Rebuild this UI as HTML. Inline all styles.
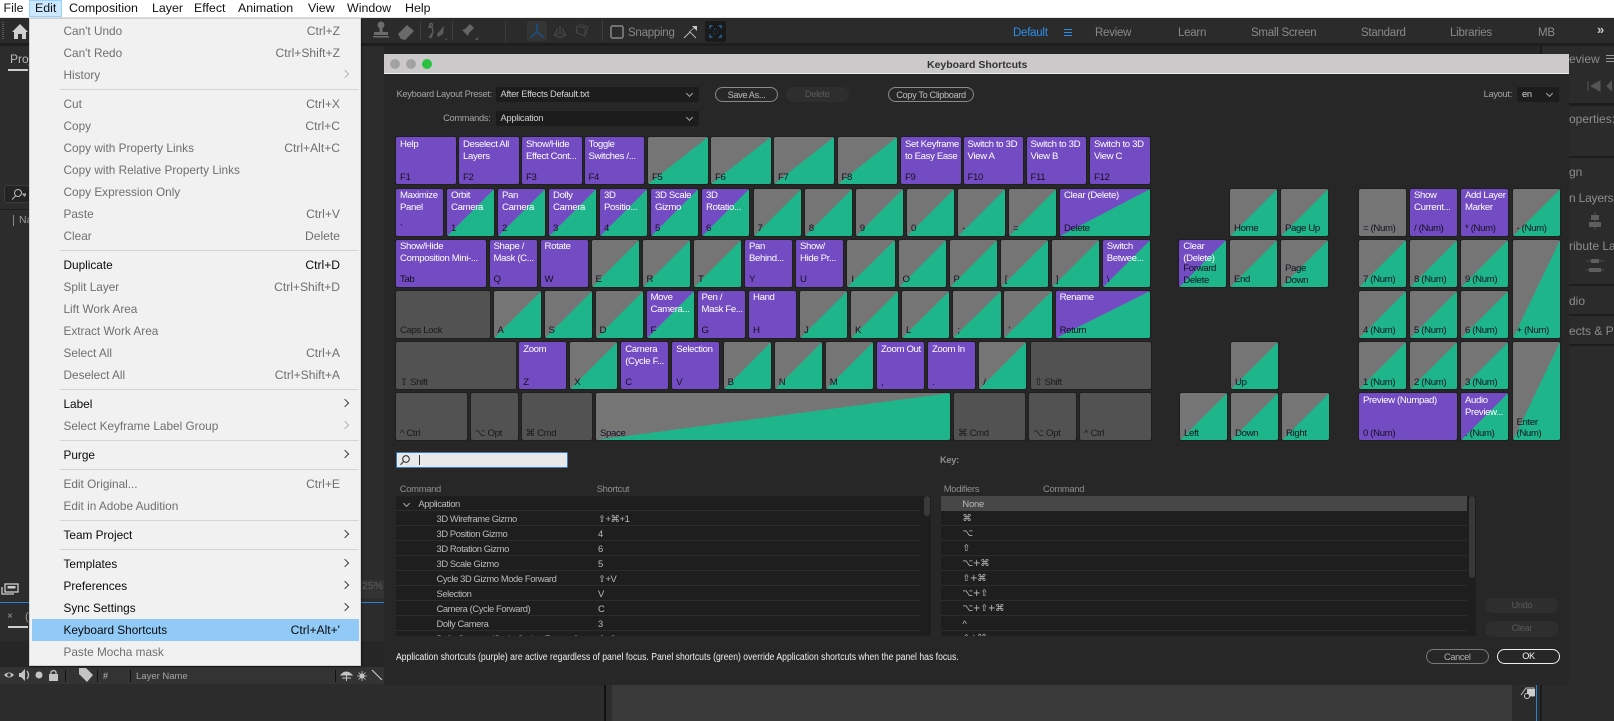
<!DOCTYPE html>
<html lang="en"><head><meta charset="utf-8"><title>Keyboard Shortcuts</title>
<style>
html,body{margin:0;padding:0;width:1614px;height:721px;overflow:hidden;background:#2c2c2c;font-family:"Liberation Sans",Arial,sans-serif}
#a{position:relative;width:1614px;height:721px;overflow:hidden}
.a,.t,.k,.s{position:absolute}
.t{white-space:nowrap;line-height:14px}
/* menu bar */
#mb{left:0;top:0;width:1614px;height:18px;background:#fff;border-bottom:1px solid #e4e4e4;box-sizing:border-box}
.m{position:absolute;top:1px;font-size:12.4px;line-height:15px;color:#111;white-space:nowrap}
/* menu */
#menu{left:28.5px;top:18px;width:332.5px;height:648px;background:#f1f1f1;border:1px solid #d0d0d0;box-sizing:border-box;box-shadow:1px 1px 2px rgba(0,0,0,.35)}
.it{position:absolute;left:34px;font-size:11.8px;line-height:14px;color:#6f6f6f;white-space:nowrap;margin-top:-1px}
.it.e{color:#0a0a0a}
.sc{position:absolute;right:20px;font-size:12.1px;line-height:14px;color:#6f6f6f;white-space:nowrap;margin-top:-1px}
.sc.e{color:#0a0a0a}
.sp{position:absolute;left:30px;width:299px;height:1px;background:#d4d4d4}
.ar{position:absolute;left:312.5px;width:5px;height:5px;border-top:1px solid #b4b4b4;border-right:1px solid #b4b4b4;transform:rotate(45deg);margin-top:-1px}
.ar.e{border-color:#444}
/* toolbar text */
.w{font-size:11.5px;color:#8a8a8a;top:26px;letter-spacing:-.25px}
.g{color:#8d8d8d;font-size:12px}
/* dialog */
#dlg{left:384px;top:54px;width:1184.5px;height:631px;background:#272727;overflow:hidden;border-radius:0 0 3px 3px}
#tb{left:384px;top:54px;width:1184.5px;height:20px;background:#cbc9ca;border-bottom:1px solid #eee;box-sizing:border-box}
.dot{position:absolute;width:10px;height:10px;border-radius:50%;top:59px}
.l{font-size:9.3px;color:#a4a4a4;line-height:12px;text-align:right;letter-spacing:-.3px}
.sel{position:absolute;background:#1c1c1c;border-radius:2px;height:15px;font-size:9.3px;color:#d2d2d2;line-height:15px;box-sizing:border-box;padding-left:5px;letter-spacing:-.25px}
.chev{position:absolute;right:7px;top:4px;width:4px;height:4px;border-right:1px solid #aaa;border-bottom:1px solid #aaa;transform:rotate(45deg)}
.btn{position:absolute;border:1px solid #8a8a8a;border-radius:8px;height:15.5px;line-height:14px;box-sizing:border-box;font-size:9.2px;color:#bdbdbd;text-align:center;letter-spacing:-.35px}
.dis{position:absolute;background:#2e2e2e;border-radius:8px;height:15.5px;line-height:15px;font-size:9.2px;color:#5a5a5a;text-align:center;letter-spacing:-.3px}
/* keys */
.k{width:47.2px;height:47px;box-sizing:border-box;border-radius:1.5px;font-size:9.6px;line-height:12px;color:#fff;overflow:hidden;outline:1px solid #1f1f1f;letter-spacing:-.35px}
.k u{position:absolute;left:4px;top:1.5px;text-decoration:none;white-space:nowrap;font-weight:normal}
.k i{position:absolute;left:4px;bottom:.5px;font-style:normal;color:#14101e;white-space:nowrap}
.k i.two{line-height:11.5px;bottom:.5px}
.p{background:#734cc3}
.gg{background:linear-gradient(to bottom right,#757575 50%,#1eb58b 50.2%)}
.pg{background:linear-gradient(to bottom right,#734cc3 50%,#1eb58b 50.2%)}
.gy{background:#757575}
.d{background:#525252}
.d i{color:#1a1a1a}
.r1{top:137.4px}.r2{top:188.7px}.r3{top:239.8px}.r4{top:290.9px}.r5{top:342px}.r6{top:393.2px}
/* table */
.tbl{position:absolute;background:#1e1e1e;top:495.7px;height:140.6px;overflow:hidden}
.ln{position:absolute;left:0;right:0;height:1px;background:#2c2c2c}
.c{position:absolute;font-size:9.4px;line-height:12px;color:#bcbcbc;white-space:nowrap;letter-spacing:-.4px;margin-top:.5px}
.h{position:absolute;font-size:9.4px;line-height:12px;color:#8f8f8f;white-space:nowrap;top:483px;letter-spacing:-.3px}
</style></head><body><div id="a">

<!-- app background -->
<div class="a" style="left:0;top:18px;width:1614px;height:25px;background:#2b2b2b"></div>
<div class="a" style="left:0;top:43px;width:1614px;height:3px;background:#1e1e1e"></div>
<div class="a" style="left:0;top:46px;width:384px;height:556px;background:#2c2c2c"></div>
<div class="a" style="left:384px;top:46px;width:1156px;height:8px;background:#262626"></div>
<div class="a" style="left:1541px;top:46px;width:73px;height:675px;background:#2b2b2b"></div>
<div class="a" style="left:1540px;top:46px;width:1.5px;height:675px;background:#1c1c1c"></div>
<div class="a" style="left:1568px;top:103px;width:46px;height:3px;background:#1d1d1d"></div>
<div class="a" style="left:1568px;top:156px;width:46px;height:2px;background:#1d1d1d"></div>
<div class="a" style="left:1568px;top:284px;width:46px;height:2px;background:#1d1d1d"></div>
<div class="a" style="left:1568px;top:314px;width:46px;height:2px;background:#1d1d1d"></div>
<div class="a" style="left:1568px;top:344px;width:46px;height:2px;background:#1d1d1d"></div>

<!-- bottom of app -->
<div class="a" style="left:0;top:602px;width:384px;height:1px;background:#2a7fd0"></div>
<div class="a" style="left:0;top:603px;width:384px;height:64px;background:#2c2c2c"></div>
<div class="a" style="left:0;top:641px;width:384px;height:26px;background:#262626"></div>
<div class="a" style="left:0;top:667px;width:384px;height:17px;background:#333"></div>
<div class="a" style="left:0;top:684px;width:604px;height:37px;background:#2c2c2c"></div>
<div class="a" style="left:604px;top:685px;width:2px;height:36px;background:#111"></div>
<div class="a" style="left:612px;top:685px;width:900px;height:36px;background:#3a3a3a"></div>
<div class="a" style="left:1512px;top:685px;width:28px;height:36px;background:#2b2b2b"></div>
<div class="a" style="left:1536px;top:685px;width:1px;height:36px;background:#2a7fd0"></div>
<svg class="a" style="left:1520px;top:686px" width="16" height="14" viewBox="0 0 16 14"><path d="M1 9 6 2h8v8H9" fill="none" stroke="#bbb"/><rect x="7" y="3" width="8" height="7" fill="#ccc"/><circle cx="7" cy="10" r="2.5" fill="#222" stroke="#ccc"/></svg>

<!-- left panel bits -->
<div class="t" style="left:10px;top:52px;font-size:12px;color:#b9b9b9">Proj</div>
<div class="a" style="left:8px;top:69px;width:20px;height:2px;background:#ccc"></div>
<div class="a" style="left:4px;top:185px;width:26px;height:18px;border:1px solid #3c3c3c;border-radius:3px;background:#232323;box-sizing:border-box"></div>
<svg class="a" style="left:10px;top:188px" width="16" height="12" viewBox="0 0 16 12"><circle cx="8" cy="5" r="3.5" fill="none" stroke="#bbb"/><path d="M5.5 8 2 11.5M13 6h3l-1.500 2z" stroke="#bbb" fill="none"/></svg>
<div class="a" style="left:13px;top:215px;width:1px;height:11px;background:#888"></div>
<div class="t" style="left:19px;top:213px;font-size:10.5px;color:#9a9a9a">Na</div>
<div class="a" style="left:0;top:209px;width:29px;height:1px;background:#1c1c1c"></div>
<svg class="a" style="left:1px;top:583px" width="18" height="12" viewBox="0 0 18 12"><rect x="4" y="1" width="13" height="8" fill="none" stroke="#ccc" stroke-width="1.300"/><rect x="6.500" y="3" width="8" height="2.500" fill="#ccc"/><path d="M1 4v7h12" fill="none" stroke="#ccc" stroke-width="1.300"/></svg>
<div class="a" style="left:361px;top:580px;width:23px;height:18px;background:#333"></div>
<div class="t" style="left:362px;top:579px;font-size:10.5px;color:#5e5e5e">25%</div>
<div class="t" style="left:7px;top:610px;font-size:10px;color:#9a9a9a">×</div>
<div class="t" style="left:25px;top:610px;font-size:11px;color:#9a9a9a">(</div>
<div class="a" style="left:8px;top:626px;width:20px;height:2px;background:#ccc"></div>

<!-- layer header -->
<svg class="a" style="left:3px;top:667px" width="58" height="16" viewBox="0 0 58 16"><path d="M1 8q5-5 10 0-5 5-10 0z" fill="#c4c4c4"/><circle cx="6" cy="8" r="1.800" fill="#333"/><path d="M16 6h2l4-4v12l-4-4h-2z" fill="#c4c4c4"/><path d="M24 4q3 4 0 8" fill="none" stroke="#c4c4c4" stroke-width="1.300"/><circle cx="36" cy="8" r="3.500" fill="#c4c4c4"/><rect x="46" y="7" width="9" height="7" fill="#c4c4c4"/><path d="M48 7V5q2.500-3 5 0v2" fill="none" stroke="#c4c4c4" stroke-width="1.300"/></svg>
<div class="a" style="left:65px;top:670px;width:1px;height:12px;background:#111"></div>
<svg class="a" style="left:78px;top:667px" width="16" height="16" viewBox="0 0 16 16"><path d="M1 1h7l7 7-6 7-8-8z" fill="#c4c4c4"/></svg>
<div class="a" style="left:97px;top:670px;width:1px;height:12px;background:#111"></div>
<div class="t" style="left:103px;top:669px;font-size:9px;color:#bbb">#</div>
<div class="a" style="left:130px;top:670px;width:1px;height:12px;background:#111"></div>
<div class="t" style="left:136px;top:670px;font-size:9.5px;color:#a4a4a4">Layer Name</div>
<div class="a" style="left:335px;top:670px;width:1px;height:12px;background:#111"></div>
<svg class="a" style="left:340px;top:668px" width="44" height="15" viewBox="0 0 44 15"><path d="M1 7q5-6 11 0zM6.500 7v6M2 10h9" fill="#c4c4c4" stroke="#c4c4c4"/><circle cx="22" cy="8" r="2.500" fill="#c4c4c4"/><path d="M22 3v10M17 8h10M18.500 4.500l7 7M25.500 4.500l-7 7" stroke="#c4c4c4" stroke-width=".8"/><path d="M32 2l2 2 6 6 2 2" stroke="#c4c4c4" stroke-width="1.200"/></svg>

<!-- toolbar -->
<svg class="a" style="left:0;top:18px" width="40" height="25" viewBox="0 0 40 25"><path d="M3 4v18" stroke="#555" stroke-width="2" stroke-dasharray="1 1"/><path d="M12 14l8-8 8 8h-2v7h-4v-5h-4v5h-4v-7z" fill="#d0d0d0"/></svg>
<svg class="a" style="left:372px;top:20px" width="18" height="20" viewBox="0 0 18 20"><circle cx="9" cy="5" r="3.500" fill="#6c6c6c"/><rect x="7.500" y="7" width="3" height="6" fill="#6c6c6c"/><rect x="2" y="12" width="14" height="3" fill="#6c6c6c"/><rect x="1" y="16" width="16" height="1.500" fill="#6c6c6c"/></svg>
<svg class="a" style="left:390px;top:18px" width="240" height="25" viewBox="0 0 240 25">
<path d="M8 16 17 7l7 6-9 9-4-1z" fill="#6a6a6a"/>
<rect x="30" y="3" width="1" height="19" fill="#3e3e3e"/>
<path d="M38 9h4l1 5-2 6M43 14l-4 6M41 5.500a1.500 1.500 0 1 0 .1 0z" stroke="#5c5c5c" fill="none" stroke-width="1.400"/><path d="M47 16l7-8-1 8-5 3z" fill="#5c5c5c"/><path d="M55 22h2v-2z" fill="#5c5c5c"/>
<rect x="62" y="3" width="1" height="19" fill="#3e3e3e"/>
<path d="M70 21l5-6-3-3 3-1 5-5 4 4-5 5-1 3-3-3z" fill="#666"/><path d="M85 22h3v-3z" fill="#5c5c5c"/>
<rect x="115" y="3" width="1" height="22" fill="#3a3a3a"/>
<rect x="137" y="3" width="20" height="20" rx="2" fill="#343434"/>
<path d="M147 8v6m0 0-6 4.500m6-4.500 6 4.500" stroke="#1a4f80" stroke-width="1.500" fill="none"/><path d="M147 5l-2 3h4zM140 20l3-.5-1.500-2.500zM154 20l-3-.5 1.500-2.500z" fill="#1a4f80"/>
<path d="M170 8v6m0 0-5 4m5-4 5 4M166 19h8M168 10l-4 8M172 10l4 8" stroke="#4c4c4c" fill="none"/>
<path d="M187 8l8 2v8l-8-3zM187 8l-1 7M187 15l8 3M189 6l9 3-3 9" stroke="#464646" fill="none"/>
<rect x="212" y="2" width="1" height="21" fill="#3e3e3e"/>
<rect x="221" y="8" width="12" height="12" rx="1.500" fill="none" stroke="#7c7c7c" stroke-width="1.700"/>
</svg>
<div class="t g" style="left:628px;top:26px;font-size:11.500px;letter-spacing:-.25px;color:#888">Snapping</div>
<svg class="a" style="left:682px;top:24px" width="18" height="16" viewBox="0 0 18 16"><path d="M2 14l6-6 6 6" stroke="#b5b5b5" fill="none" stroke-width="1"/><path d="M7 8 12 4" stroke="#b5b5b5" stroke-width=".8"/><path d="M10 2h5v5z" fill="#c8c8c8"/></svg>
<div class="a" style="left:705px;top:21px;width:21px;height:21px;background:#1a1a1a;border-radius:2px"></div>
<svg class="a" style="left:709px;top:25px" width="13" height="13" viewBox="0 0 15 15"><path d="M1 4V1h3M11 1h3v3M14 11v3h-3M4 14H1v-3" stroke="#2a82d3" fill="none" stroke-width="1.100"/><path d="M6 5h1M9 5h-.5M5 8h.8M9.500 8h.8M6 10.500h1" stroke="#2a82d3"/></svg>

<!-- workspace tabs -->
<div class="t w" style="left:1013px;color:#2d8fe8">Default</div>
<div class="a" style="left:1064px;top:29px;width:8px;height:1px;background:#2d8fe8;box-shadow:0 3px 0 #2d8fe8,0 6px 0 #2d8fe8"></div>
<div class="t w" style="left:1095px">Review</div>
<div class="t w" style="left:1178px">Learn</div>
<div class="t w" style="left:1251px">Small Screen</div>
<div class="t w" style="left:1361px">Standard</div>
<div class="t w" style="left:1450px">Libraries</div>
<div class="t w" style="left:1538px">MB</div>
<div class="t" style="left:1597px;top:23px;font-size:13px;color:#c8c8c8;font-weight:bold">»</div>

<!-- right panels -->
<div class="t g" style="left:1569px;top:52px">eview</div>
<div class="a" style="left:1606px;top:55px;width:8px;height:1px;background:#9a9a9a;box-shadow:0 3px 0 #9a9a9a,0 6px 0 #9a9a9a"></div>
<svg class="a" style="left:1587px;top:80px" width="27" height="12" viewBox="0 0 27 12"><path d="M1 1v10M13 1v10L4 6zM25 1l-5 5 5 5" fill="#555" stroke="#555"/></svg>
<div class="t g" style="left:1569px;top:112px">operties: N</div>
<div class="t g" style="left:1569px;top:165px">gn</div>
<div class="t g" style="left:1569px;top:191px;letter-spacing:-.2px">n Layers t</div>
<svg class="a" style="left:1587px;top:212px" width="16" height="18" viewBox="0 0 16 18"><path d="M8 0v18" stroke="#4d4d4d"/><rect x="4" y="3" width="8" height="5" fill="#5e5e5e"/><rect x="2" y="10" width="12" height="5" fill="#5e5e5e"/></svg>
<div class="t g" style="left:1569px;top:239px">ribute Lay</div>
<svg class="a" style="left:1586px;top:256px" width="18" height="18" viewBox="0 0 18 18"><path d="M0 5h18M0 14h18" stroke="#4d4d4d"/><rect x="5" y="3" width="8" height="4" fill="#5e5e5e"/><rect x="3" y="12" width="12" height="4" fill="#5e5e5e"/></svg>
<div class="t g" style="left:1569px;top:294px">dio</div>
<div class="t g" style="left:1569px;top:324px">ects &amp; Pre</div>

<!-- menu bar -->
<div class="a" id="mb"></div>
<div class="a" style="left:28.500px;top:0;width:33.500px;height:17px;background:#cce8ff;border:1px solid #99d1ff;box-sizing:border-box"></div>
<span class="m" style="left:3.500px">File</span>
<span class="m" style="left:35px">Edit</span>
<span class="m" style="left:69px">Composition</span>
<span class="m" style="left:152px">Layer</span>
<span class="m" style="left:194px">Effect</span>
<span class="m" style="left:238px">Animation</span>
<span class="m" style="left:308px">View</span>
<span class="m" style="left:347px">Window</span>
<span class="m" style="left:405px">Help</span>

<!-- dialog -->
<div class="a" id="dlg"></div>
<div class="a" id="tb"></div>
<div class="dot" style="left:390px;background:#a2a2a2"></div>
<div class="dot" style="left:406px;background:#a2a2a2"></div>
<div class="dot" style="left:421.500px;background:#29c13f"></div>
<div class="t" style="left:927px;top:57.500px;font-size:10.500px;font-weight:bold;color:#333">Keyboard Shortcuts</div>

<div class="t l" style="left:396.500px;top:88px;width:94px">Keyboard Layout Preset:</div>
<div class="sel" style="left:495.500px;top:86.700px;width:203px">After Effects Default.txt<span class="chev"></span></div>
<div class="t l" style="left:396.500px;top:112px;width:94px">Commands:</div>
<div class="sel" style="left:495.500px;top:110.700px;width:203px">Application<span class="chev"></span></div>
<div class="btn" style="left:715px;top:86.500px;width:63px">Save As...</div>
<div class="dis" style="left:785.500px;top:86.500px;width:63.500px">Delete</div>
<div class="btn" style="left:888px;top:86.500px;width:86px">Copy To Clipboard</div>
<div class="t l" style="left:1470px;top:88px;width:42px">Layout:</div>
<div class="sel" style="left:1517px;top:86.700px;width:42px">en<span class="chev"></span></div>

<!-- row 1 -->
<div class="k p r1" style="left:396px;width:59.500px"><u>Help</u><i>F1</i></div>
<div class="k p r1" style="left:459px;width:59.500px"><u>Deselect All<br>Layers</u><i>F2</i></div>
<div class="k p r1" style="left:522px;width:59.500px"><u>Show/Hide<br>Effect Cont...</u><i>F3</i></div>
<div class="k p r1" style="left:584.500px;width:59.500px"><u>Toggle<br>Switches /...</u><i>F4</i></div>
<div class="k gg r1" style="left:648px;width:59.500px"><i>F5</i></div>
<div class="k gg r1" style="left:711px;width:59.500px"><i>F6</i></div>
<div class="k gg r1" style="left:774px;width:59.500px"><i>F7</i></div>
<div class="k gg r1" style="left:837.500px;width:59.500px"><i>F8</i></div>
<div class="k p r1" style="left:901px;width:59.500px"><u>Set Keyframe<br>to Easy Ease</u><i>F9</i></div>
<div class="k p r1" style="left:963.500px;width:59.500px"><u>Switch to 3D<br>View A</u><i>F10</i></div>
<div class="k p r1" style="left:1026.500px;width:59.500px"><u>Switch to 3D<br>View B</u><i>F11</i></div>
<div class="k p r1" style="left:1090px;width:60px"><u>Switch to 3D<br>View C</u><i>F12</i></div>

<!-- row 2 -->
<div class="k p r2" style="left:396px"><u>Maximize<br>Panel</u><i>`</i></div>
<div class="k pg r2" style="left:447px"><u>Orbit<br>Camera</u><i>1</i></div>
<div class="k pg r2" style="left:498px"><u>Pan<br>Camera</u><i>2</i></div>
<div class="k pg r2" style="left:549px"><u>Dolly<br>Camera</u><i>3</i></div>
<div class="k pg r2" style="left:600px"><u>3D<br>Positio...</u><i>4</i></div>
<div class="k pg r2" style="left:651px"><u>3D Scale<br>Gizmo</u><i>5</i></div>
<div class="k pg r2" style="left:702px"><u>3D<br>Rotatio...</u><i>6</i></div>
<div class="k gg r2" style="left:753.500px"><i>7</i></div>
<div class="k gg r2" style="left:804.700px"><i>8</i></div>
<div class="k gg r2" style="left:855.800px"><i>9</i></div>
<div class="k gg r2" style="left:907px"><i>0</i></div>
<div class="k gg r2" style="left:958px"><i>-</i></div>
<div class="k gg r2" style="left:1009px"><i>=</i></div>
<div class="k pg r2" style="left:1060px;width:90px"><u>Clear (Delete)</u><i>Delete</i></div>
<div class="k gg r2" style="left:1230px"><i>Home</i></div>
<div class="k gg r2" style="left:1281px"><i>Page Up</i></div>
<div class="k gy r2" style="left:1359px"><i>= (Num)</i></div>
<div class="k p r2" style="left:1410px"><u>Show<br>Current...</u><i>/ (Num)</i></div>
<div class="k p r2" style="left:1461px"><u>Add Layer<br>Marker</u><i>* (Num)</i></div>
<div class="k gg r2" style="left:1512.500px"><i>- (Num)</i></div>

<!-- row 3 -->
<div class="k p r3" style="left:396px;width:90px"><u>Show/Hide<br>Composition Mini-...</u><i>Tab</i></div>
<div class="k p r3" style="left:489.500px"><u>Shape /<br>Mask (C...</u><i>Q</i></div>
<div class="k p r3" style="left:540.500px"><u>Rotate</u><i>W</i></div>
<div class="k gg r3" style="left:591.500px"><i>E</i></div>
<div class="k gg r3" style="left:642.500px"><i>R</i></div>
<div class="k gg r3" style="left:694px"><i>T</i></div>
<div class="k p r3" style="left:745px"><u>Pan<br>Behind...</u><i>Y</i></div>
<div class="k p r3" style="left:796px"><u>Show/<br>Hide Pr...</u><i>U</i></div>
<div class="k gg r3" style="left:847.400px"><i>I</i></div>
<div class="k gg r3" style="left:898.500px"><i>O</i></div>
<div class="k gg r3" style="left:949.500px"><i>P</i></div>
<div class="k gg r3" style="left:1000.800px"><i>[</i></div>
<div class="k gg r3" style="left:1051.700px"><i>]</i></div>
<div class="k pg r3" style="left:1102.700px"><u>Switch<br>Betwee...</u><i>\</i></div>
<div class="k pg r3" style="left:1179.300px"><u>Clear<br>(Delete)</u><i class="two">Forward<br>Delete</i></div>
<div class="k gg r3" style="left:1230px"><i>End</i></div>
<div class="k gg r3" style="left:1281px"><i class="two">Page<br>Down</i></div>
<div class="k gg r3" style="left:1359px"><i>7 (Num)</i></div>
<div class="k gg r3" style="left:1410px"><i>8 (Num)</i></div>
<div class="k gg r3" style="left:1461px"><i>9 (Num)</i></div>
<div class="k gg r3" style="left:1512.500px;height:98px"><i>+ (Num)</i></div>

<!-- row 4 -->
<div class="k d r4" style="left:396px;width:94px"><i>Caps Lock</i></div>
<div class="k gg r4" style="left:493.500px"><i>A</i></div>
<div class="k gg r4" style="left:544.500px"><i>S</i></div>
<div class="k gg r4" style="left:595.500px"><i>D</i></div>
<div class="k pg r4" style="left:646.500px"><u>Move<br>Camera...</u><i>F</i></div>
<div class="k p r4" style="left:697.500px"><u>Pen /<br>Mask Fe...</u><i>G</i></div>
<div class="k p r4" style="left:749px"><u>Hand</u><i>H</i></div>
<div class="k gg r4" style="left:800px"><i>J</i></div>
<div class="k gg r4" style="left:851px"><i>K</i></div>
<div class="k gg r4" style="left:902px"><i>L</i></div>
<div class="k gg r4" style="left:953.400px"><i>;</i></div>
<div class="k gg r4" style="left:1004.400px"><i>'</i></div>
<div class="k pg r4" style="left:1055.600px;width:94.400px"><u>Rename</u><i>Return</i></div>
<div class="k gg r4" style="left:1359px"><i>4 (Num)</i></div>
<div class="k gg r4" style="left:1410px"><i>5 (Num)</i></div>
<div class="k gg r4" style="left:1461px"><i>6 (Num)</i></div>

<!-- row 5 -->
<div class="k d r5" style="left:396px;width:120px"><i style="color:#1a1a1a"><span style="font-family:'DejaVu Sans',sans-serif">⇧</span> Shift</i></div>
<div class="k p r5" style="left:519.200px"><u>Zoom</u><i>Z</i></div>
<div class="k gg r5" style="left:570.200px"><i>X</i></div>
<div class="k p r5" style="left:621.200px"><u>Camera<br>(Cycle F...</u><i>C</i></div>
<div class="k p r5" style="left:672.300px"><u>Selection</u><i>V</i></div>
<div class="k gg r5" style="left:723.600px"><i>B</i></div>
<div class="k gg r5" style="left:774.700px"><i>N</i></div>
<div class="k gg r5" style="left:825.700px"><i>M</i></div>
<div class="k p r5" style="left:877px"><u>Zoom Out</u><i>,</i></div>
<div class="k p r5" style="left:928px"><u>Zoom In</u><i>.</i></div>
<div class="k gg r5" style="left:979.200px"><i>/</i></div>
<div class="k d r5" style="left:1030.500px;width:120px"><i><span style="font-family:'DejaVu Sans',sans-serif">⇧</span> Shift</i></div>
<div class="k gg r5" style="left:1231px"><i>Up</i></div>
<div class="k gg r5" style="left:1359px"><i>1 (Num)</i></div>
<div class="k gg r5" style="left:1410px"><i>2 (Num)</i></div>
<div class="k gg r5" style="left:1461px"><i>3 (Num)</i></div>
<div class="k gg r5" style="left:1512.500px;height:98px"><i class="two">Enter<br>(Num)</i></div>

<!-- row 6 -->
<div class="k d r6" style="left:396px;width:70.500px"><i>^ Ctrl</i></div>
<div class="k d r6" style="left:470.500px"><i><span style="font-family:'DejaVu Sans',sans-serif">⌥</span> Opt</i></div>
<div class="k d r6" style="left:521.500px;width:70.500px"><i><span style="font-family:'DejaVu Sans',sans-serif">⌘</span> Cmd</i></div>
<div class="k gg r6" style="left:596px;width:354px"><i>Space</i></div>
<div class="k d r6" style="left:954px;width:70.500px"><i><span style="font-family:'DejaVu Sans',sans-serif">⌘</span> Cmd</i></div>
<div class="k d r6" style="left:1029px"><i><span style="font-family:'DejaVu Sans',sans-serif">⌥</span> Opt</i></div>
<div class="k d r6" style="left:1080px;width:70.500px"><i>^ Ctrl</i></div>
<div class="k gg r6" style="left:1180px"><i>Left</i></div>
<div class="k gg r6" style="left:1231px"><i>Down</i></div>
<div class="k gg r6" style="left:1282px"><i>Right</i></div>
<div class="k p r6" style="left:1359px;width:98px"><u>Preview (Numpad)</u><i>0 (Num)</i></div>
<div class="k pg r6" style="left:1461px"><u>Audio<br>Preview...</u><i>. (Num)</i></div>

<!-- search -->
<div class="a" style="left:396px;top:452.300px;width:172px;height:15.500px;background:#e9e9e9;border:1px solid #3b7fc4;box-sizing:border-box;border-radius:1.500px"></div>
<svg class="a" style="left:399px;top:454px" width="12" height="12" viewBox="0 0 12 12"><circle cx="7" cy="5" r="3.300" fill="none" stroke="#333" stroke-width="1.100"/><path d="M4.500 7.500 1.500 10.800" stroke="#333" stroke-width="1.100"/></svg>
<div class="a" style="left:418.500px;top:455px;width:1px;height:10px;background:#333"></div>
<div class="t l" style="left:940px;top:454px;text-align:left;font-weight:bold;color:#8e8e8e">Key:</div>

<!-- headers -->
<div class="h" style="left:399.800px">Command</div>
<div class="h" style="left:596.700px">Shortcut</div>
<div class="h" style="left:943.800px">Modifiers</div>
<div class="h" style="left:1043px">Command</div>

<!-- table left -->
<div class="tbl" style="left:396px;width:535px">
<div class="ln" style="top:14.500px;right:11px"></div><div class="ln" style="top:29.500px;right:11px"></div><div class="ln" style="top:44.500px;right:11px"></div><div class="ln" style="top:59.500px;right:11px"></div><div class="ln" style="top:74.500px;right:11px"></div><div class="ln" style="top:89.500px;right:11px"></div><div class="ln" style="top:104.500px;right:11px"></div><div class="ln" style="top:119.500px;right:11px"></div><div class="ln" style="top:134.500px;right:11px"></div>
</div>
<div class="a" style="left:923.500px;top:496px;width:6.500px;height:20px;background:#3a3a3a;border-radius:3px"></div>
<div class="a" style="left:404px;top:501px;width:4px;height:4px;border-right:1px solid #aaa;border-bottom:1px solid #aaa;transform:rotate(45deg)"></div>
<div class="c" style="left:418.400px;top:497.500px">Application</div>
<div class="c" style="left:436.500px;top:512.500px">3D Wireframe Gizmo</div><div class="c" style="left:598px;top:512.500px;font-family:'Liberation Sans','DejaVu Sans',sans-serif">⇧+⌘+1</div>
<div class="c" style="left:436.500px;top:527.500px">3D Position Gizmo</div><div class="c" style="left:598px;top:527.500px">4</div>
<div class="c" style="left:436.500px;top:542.500px">3D Rotation Gizmo</div><div class="c" style="left:598px;top:542.500px">6</div>
<div class="c" style="left:436.500px;top:557.500px">3D Scale Gizmo</div><div class="c" style="left:598px;top:557.500px">5</div>
<div class="c" style="left:436.500px;top:572.500px">Cycle 3D Gizmo Mode Forward</div><div class="c" style="left:598px;top:572.500px;font-family:'Liberation Sans','DejaVu Sans',sans-serif">⇧+V</div>
<div class="c" style="left:436.500px;top:587.500px">Selection</div><div class="c" style="left:598px;top:587.500px">V</div>
<div class="c" style="left:436.500px;top:602.500px">Camera (Cycle Forward)</div><div class="c" style="left:598px;top:602.500px">C</div>
<div class="c" style="left:436.500px;top:617.500px">Dolly Camera</div><div class="c" style="left:598px;top:617.500px">3</div>
<div class="a" style="left:396px;top:631px;width:527px;height:5.300px;overflow:hidden"><div class="c" style="left:40.500px;top:1.500px">Dolly Camera (Cycle Option Forward)</div><div class="c" style="left:202px;top:1.500px;font-family:'Liberation Sans','DejaVu Sans',sans-serif">⇧+3</div></div>

<!-- table right -->
<div class="tbl" style="left:940.700px;width:535.300px">
<div class="a" style="left:0;top:0;width:526px;height:15px;background:#474747"></div>
<div class="ln" style="top:29.500px;right:9px"></div><div class="ln" style="top:44.500px;right:9px"></div><div class="ln" style="top:59.500px;right:9px"></div><div class="ln" style="top:74.500px;right:9px"></div><div class="ln" style="top:89.500px;right:9px"></div><div class="ln" style="top:104.500px;right:9px"></div><div class="ln" style="top:119.500px;right:9px"></div><div class="ln" style="top:134.500px;right:9px"></div>
</div>
<div class="a" style="left:1468.500px;top:496px;width:6.500px;height:82px;background:#383838;border-radius:3px"></div>
<div class="c" style="left:962.400px;top:497.500px;letter-spacing:-.2px">None</div>
<div class="c" style="left:962.400px;top:512.500px;font-family:'DejaVu Sans',sans-serif">⌘</div>
<div class="c" style="left:962.400px;top:527.500px;font-family:'DejaVu Sans',sans-serif">⌥</div>
<div class="c" style="left:962.400px;top:542.500px;font-family:'DejaVu Sans',sans-serif">⇧</div>
<div class="c" style="left:962.400px;top:557.500px;font-family:'DejaVu Sans',sans-serif">⌥+⌘</div>
<div class="c" style="left:962.400px;top:572.500px;font-family:'DejaVu Sans',sans-serif">⇧+⌘</div>
<div class="c" style="left:962.400px;top:587.500px;font-family:'DejaVu Sans',sans-serif">⌥+⇧</div>
<div class="c" style="left:962.400px;top:602.500px;font-family:'DejaVu Sans',sans-serif">⌥+⇧+⌘</div>
<div class="c" style="left:962.400px;top:617.500px">^</div>
<div class="a" style="left:940px;top:631px;width:80px;height:5.300px;overflow:hidden"><div class="c" style="left:22.400px;top:1.500px;font-family:'DejaVu Sans',sans-serif">⇧+⌘</div></div>

<!-- buttons -->
<div class="dis" style="left:1484.700px;top:597.700px;width:74.300px">Undo</div>
<div class="dis" style="left:1484.700px;top:621px;width:74.300px">Clear</div>
<div class="t" style="left:396px;top:651px;font-size:10px;color:#f0f0f0;transform:scaleX(.863);transform-origin:0 50%">Application shortcuts (purple) are active regardless of panel focus. Panel shortcuts (green) override Application shortcuts when the panel has focus.</div>
<div class="btn" style="left:1426px;top:648.900px;width:62.600px;color:#b0b0b0;border-color:#7a7a7a">Cancel</div>
<div class="btn" style="left:1497px;top:648.900px;width:63px;color:#f2f2f2;border-color:#f0f0f0;border-width:1.300px;line-height:13.500px">OK</div>

<!-- Edit menu -->
<div class="a" id="menu">
<div class="a" style="left:2px;top:600px;width:327px;height:22px;background:#91c9f7"></div>
<div class="it" style="top:5.700px">Can't Undo</div><div class="sc" style="top:5.700px">Ctrl+Z</div>
<div class="it" style="top:27.700px">Can't Redo</div><div class="sc" style="top:27.700px">Ctrl+Shift+Z</div>
<div class="it" style="top:49.700px">History</div><div class="ar" style="top:53px"></div>
<div class="sp" style="top:70px"></div>
<div class="it" style="top:78.700px">Cut</div><div class="sc" style="top:78.700px">Ctrl+X</div>
<div class="it" style="top:100.700px">Copy</div><div class="sc" style="top:100.700px">Ctrl+C</div>
<div class="it" style="top:122.700px">Copy with Property Links</div><div class="sc" style="top:122.700px">Ctrl+Alt+C</div>
<div class="it" style="top:144.700px">Copy with Relative Property Links</div>
<div class="it" style="top:166.700px">Copy Expression Only</div>
<div class="it" style="top:188.700px">Paste</div><div class="sc" style="top:188.700px">Ctrl+V</div>
<div class="it" style="top:210.700px">Clear</div><div class="sc" style="top:210.700px">Delete</div>
<div class="sp" style="top:231px"></div>
<div class="it e" style="top:240px">Duplicate</div><div class="sc e" style="top:240px">Ctrl+D</div>
<div class="it" style="top:262px">Split Layer</div><div class="sc" style="top:262px">Ctrl+Shift+D</div>
<div class="it" style="top:284px">Lift Work Area</div>
<div class="it" style="top:306px">Extract Work Area</div>
<div class="it" style="top:328px">Select All</div><div class="sc" style="top:328px">Ctrl+A</div>
<div class="it" style="top:350px">Deselect All</div><div class="sc" style="top:350px">Ctrl+Shift+A</div>
<div class="sp" style="top:370px"></div>
<div class="it e" style="top:378.700px">Label</div><div class="ar e" style="top:382px"></div>
<div class="it" style="top:400.700px">Select Keyframe Label Group</div><div class="ar" style="top:404px"></div>
<div class="sp" style="top:421px"></div>
<div class="it e" style="top:430px">Purge</div><div class="ar e" style="top:433px"></div>
<div class="sp" style="top:450px"></div>
<div class="it" style="top:459px">Edit Original...</div><div class="sc" style="top:459px">Ctrl+E</div>
<div class="it" style="top:480.700px">Edit in Adobe Audition</div>
<div class="sp" style="top:501px"></div>
<div class="it e" style="top:509.700px">Team Project</div><div class="ar e" style="top:513px"></div>
<div class="sp" style="top:530px"></div>
<div class="it e" style="top:538.700px">Templates</div><div class="ar e" style="top:542px"></div>
<div class="it e" style="top:560.700px">Preferences</div><div class="ar e" style="top:564px"></div>
<div class="it e" style="top:582.700px">Sync Settings</div><div class="ar e" style="top:586px"></div>
<div class="it e" style="top:604.700px">Keyboard Shortcuts</div><div class="sc e" style="top:604.700px">Ctrl+Alt+'</div>
<div class="it" style="top:626.700px">Paste Mocha mask</div>
</div>
</div></body></html>
